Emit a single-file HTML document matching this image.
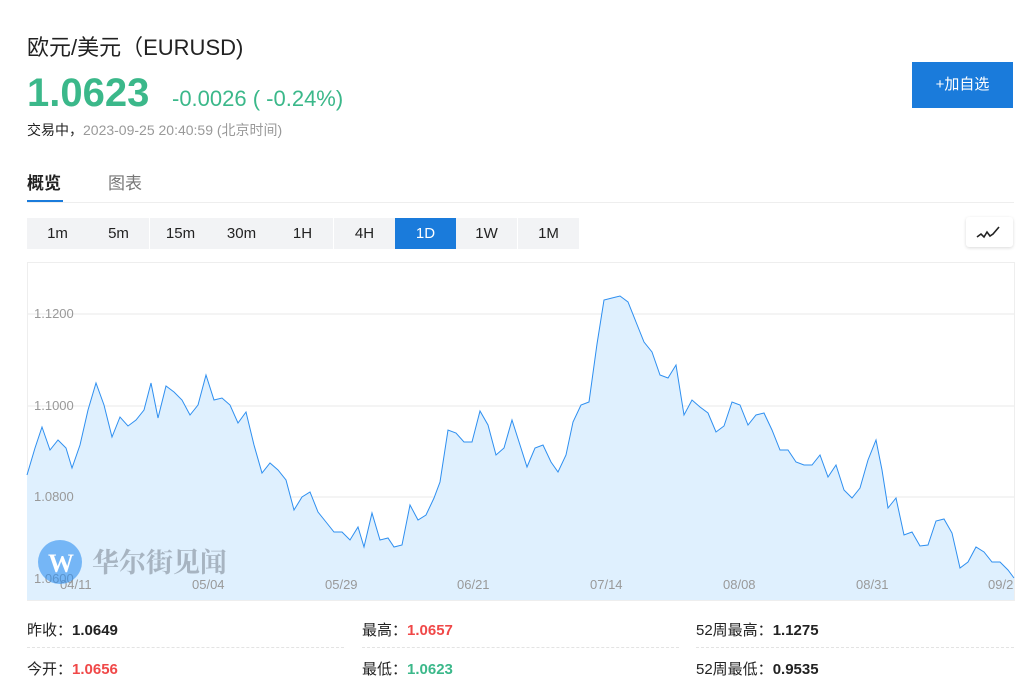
<!DOCTYPE html>
<html><head><meta charset="utf-8"><style>
*{margin:0;padding:0;box-sizing:border-box}
body{width:1024px;height:684px;background:#fff;font-family:"Liberation Sans","Noto Sans CJK SC",sans-serif;position:relative;overflow:hidden;color:#222}
.a{position:absolute;white-space:nowrap}
.btn{position:absolute;top:218px;height:31px;width:61px;background:#f2f3f5;font-size:15px;color:#222;text-align:center;line-height:31px}
.lab{font-size:15px;color:#222}
.dash{position:absolute;top:647px;height:0;border-top:1px dashed #e3e3e3}
</style></head><body>
<div class="a" style="left:27px;top:30px;font-size:22px;color:#222">欧元/美元（EURUSD)</div>
<div class="a" style="left:27px;top:71px;font-size:40px;font-weight:bold;color:#3bb88a">1.0623</div>
<div class="a" style="left:172px;top:86px;font-size:22px;color:#3bb88a">-0.0026 ( -0.24%)</div>
<div class="a" style="left:27px;top:120px;font-size:14px;color:#222;font-weight:normal">交易中，<span style="color:#999">2023-09-25 20:40:59 (北京时间)</span></div>
<div class="a" style="left:912px;top:62px;width:101px;height:46px;background:#1a7bdb;color:#fff;font-size:15px;text-align:center;line-height:46px">+加自选</div>
<div class="a" style="left:27px;top:169px;font-size:17px;font-weight:bold;color:#222">概览</div>
<div class="a" style="left:108px;top:169px;font-size:17px;color:#777">图表</div>
<div class="a" style="left:27px;top:200px;width:36px;height:3px;background:#1a7bdb"></div>
<div class="a" style="left:27px;top:202px;width:987px;height:1px;background:#eee"></div>
<div class="btn" style="left:27px">1m</div><div class="btn" style="left:88px">5m</div><div class="btn" style="left:150px">15m</div><div class="btn" style="left:211px">30m</div><div class="btn" style="left:272px">1H</div><div class="btn" style="left:334px">4H</div><div class="btn" style="left:395px;background:#1a7bdb;color:#fff">1D</div><div class="btn" style="left:456px">1W</div><div class="btn" style="left:518px">1M</div>
<div class="a" style="left:966px;top:217px;width:47px;height:30px;background:#fff;border-radius:3px;box-shadow:0 1px 3px rgba(0,0,0,.15)">
<svg width="47" height="30"><polyline points="11,20 15,17 18,20 21,15 24,19 27,17 33,10" fill="none" stroke="#222" stroke-width="1.6"/></svg></div>
<svg class="a" style="left:0;top:0" width="1024" height="684">
<rect x="27.5" y="262.5" width="987" height="338" fill="#fff" stroke="#eee"/>
<g stroke="#eaeaea"><line x1="28" x2="1014" y1="314" y2="314"/><line x1="28" x2="1014" y1="406" y2="406"/><line x1="28" x2="1014" y1="497" y2="497"/><line x1="28" x2="1014" y1="589" y2="589"/></g>
<polygon fill="#dff0fe" points="27,600 27,475 35,448 42,427 50,450 58,440 66,448 72,468 80,445 88,410 96,383 104,405 112,437 120,417 128,426 136,420 144,410 151,383 158,418 166,386 174,392 182,400 190,415 198,405 206,375 214,400 222,398 230,405 238,423 246,412 254,445 262,473 270,463 278,470 286,480 294,510 302,497 310,492 318,512 326,522 334,532 342,532 350,540 358,527 364,547 372,513 380,540 388,538 394,547 402,545 410,505 418,520 426,515 434,498 440,482 448,430 456,433 464,442 472,442 480,411 488,425 496,455 504,448 512,420 520,445 527,467 535,448 543,445 551,462 558,472 566,455 573,422 581,405 589,402 597,344 604,300 612,298 620,296 628,302 636,322 644,342 652,352 660,375 668,378 676,365 684,415 692,400 700,407 708,413 716,432 724,426 732,402 740,405 748,425 756,415 764,413 772,430 780,450 788,450 796,462 804,465 812,465 820,455 828,477 836,465 844,490 852,498 860,488 868,460 876,440 882,470 888,508 896,498 904,535 912,532 920,546 928,545 936,521 944,519 952,533 960,568 968,562 976,547 984,552 992,562 1000,562 1008,570 1014,578 1014,600"/>
<polyline fill="none" stroke="#2e8ff0" stroke-width="1" points="27,475 35,448 42,427 50,450 58,440 66,448 72,468 80,445 88,410 96,383 104,405 112,437 120,417 128,426 136,420 144,410 151,383 158,418 166,386 174,392 182,400 190,415 198,405 206,375 214,400 222,398 230,405 238,423 246,412 254,445 262,473 270,463 278,470 286,480 294,510 302,497 310,492 318,512 326,522 334,532 342,532 350,540 358,527 364,547 372,513 380,540 388,538 394,547 402,545 410,505 418,520 426,515 434,498 440,482 448,430 456,433 464,442 472,442 480,411 488,425 496,455 504,448 512,420 520,445 527,467 535,448 543,445 551,462 558,472 566,455 573,422 581,405 589,402 597,344 604,300 612,298 620,296 628,302 636,322 644,342 652,352 660,375 668,378 676,365 684,415 692,400 700,407 708,413 716,432 724,426 732,402 740,405 748,425 756,415 764,413 772,430 780,450 788,450 796,462 804,465 812,465 820,455 828,477 836,465 844,490 852,498 860,488 868,460 876,440 882,470 888,508 896,498 904,535 912,532 920,546 928,545 936,521 944,519 952,533 960,568 968,562 976,547 984,552 992,562 1000,562 1008,570 1014,578"/>
<g font-size="13" fill="#999" font-family="Liberation Sans,sans-serif"><text x="34" y="318">1.1200</text><text x="34" y="410">1.1000</text><text x="34" y="501">1.0800</text><text x="34" y="583">1.0600</text>
<text x="60" y="589">04/11</text><text x="192" y="589">05/04</text><text x="325" y="589">05/29</text><text x="457" y="589">06/21</text><text x="590" y="589">07/14</text><text x="723" y="589">08/08</text><text x="856" y="589">08/31</text><text x="988" y="589">09/2</text></g>
<circle cx="60" cy="562" r="22" fill="#2e8ff0" opacity=".6"/>
<text x="48" y="572" font-size="26" font-weight="bold" fill="#fff" font-family="Liberation Serif,serif">W</text>
<text x="92" y="572" font-size="27" font-weight="bold" fill="#9aa6b2" opacity=".8" font-family="Noto Serif CJK SC,serif">华尔街见闻</text>
</svg>
<div class="a lab" style="left:27px;top:619px">昨收：<b>1.0649</b></div>
<div class="a lab" style="left:362px;top:619px">最高：<b style="color:#f04848">1.0657</b></div>
<div class="a lab" style="left:696px;top:619px">52周最高：<b>1.1275</b></div>
<div class="dash" style="left:27px;width:317px"></div><div class="dash" style="left:362px;width:317px"></div><div class="dash" style="left:696px;width:318px"></div>
<div class="a lab" style="left:27px;top:658px">今开：<b style="color:#f04848">1.0656</b></div>
<div class="a lab" style="left:362px;top:658px">最低：<b style="color:#3bb88a">1.0623</b></div>
<div class="a lab" style="left:696px;top:658px">52周最低：<b>0.9535</b></div>
</body></html>
